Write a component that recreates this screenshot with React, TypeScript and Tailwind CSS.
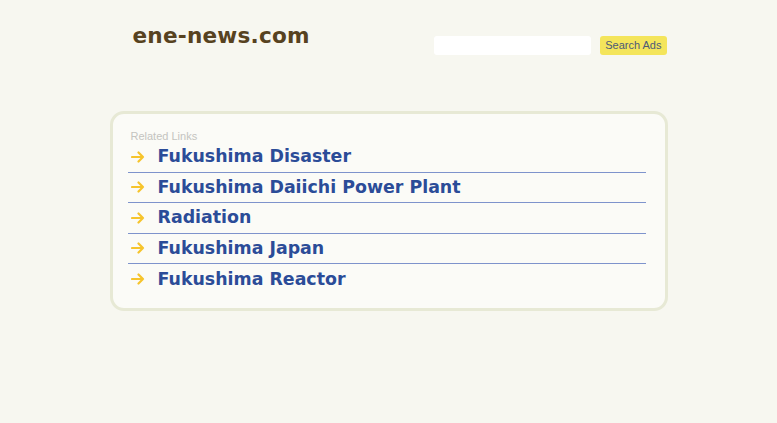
const links = [
  "Fukushima Disaster",
  "Fukushima Daiichi Power Plant",
  "Radiation",
  "Fukushima Japan",
  "Fukushima Reactor",
];

// Short yellow arrow shown before each related link.
const Arrow = () => (
  <svg width="14" height="12" viewBox="0 0 14 12" className="shrink-0">
    <path d="M1 6h11M7.5 1.5 12 6l-4.5 4.5" fill="none" stroke="#f6c42c" strokeWidth="2.2" strokeLinecap="round" strokeLinejoin="round" />
  </svg>
);

export default function App() {
  return (
    <div className="min-h-[423px] w-full bg-[#f7f7f0] pt-[22px] font-['DejaVu_Sans',sans-serif]">
      <div className="mx-auto w-[558px]">
        <header className="flex items-start justify-between pl-[23px] pr-[1px]">
          <h1 className="text-[21.6px] font-bold leading-[28px] tracking-[0.2px] text-[#574220]">ene-news.com</h1>
          <form className="mt-[14px] flex items-center gap-[9px]" onSubmit={(e) => e.preventDefault()}>
            <input className="h-[19px] w-[157px] rounded-[3px] bg-white outline-none" aria-label="Search" />
            <button
              type="submit"
              className="h-[19px] rounded-[3px] bg-[#f4e55b] px-[5px] font-['Liberation_Sans',Arial,sans-serif] text-[11px] leading-[19px] text-[#4d5a78]"
            >
              Search Ads
            </button>
          </form>
        </header>

        <section className="mt-[56px] rounded-[14px] border-[3px] border-[#e7e9d5] bg-[#fbfbf7] pb-[13px] pl-[15px] pr-[19px] pt-[16px]">
          <div className="pl-[3px] font-['Liberation_Sans',Arial,sans-serif] text-[11px] leading-[12px] text-[#c4c4c0]">Related Links</div>
          <ul>
            {links.map((label, i) => (
              <li
                key={label}
                className={`flex h-[30.5px] items-center gap-[13px] pl-[3px] ${i < links.length - 1 ? "border-b border-[#7e93cc]" : ""}`}
              >
                <Arrow />
                <a href="#" className="text-[17.4px] font-bold leading-none text-[#2b4c98]">
                  {label}
                </a>
              </li>
            ))}
          </ul>
        </section>
      </div>
    </div>
  );
}
